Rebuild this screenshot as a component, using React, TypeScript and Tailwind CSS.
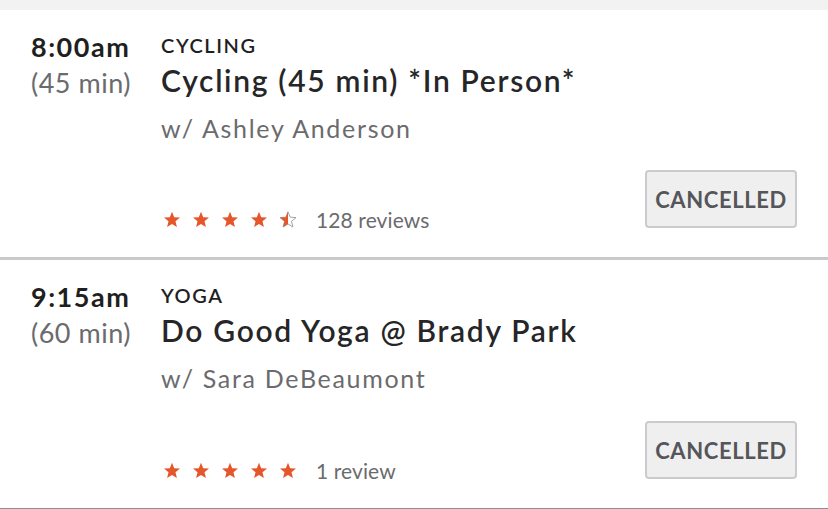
import React from "react";

const ORANGE = "#e5562b";

function Star({ x, half }: { x: number; half?: boolean }) {
  const d =
    "M9 0.8 L11.2 6.2 L17 6.6 L12.5 10.3 L13.9 16 L9 12.9 L4.1 16 L5.5 10.3 L1 6.6 L6.8 6.2 Z";
  return (
    <svg width="18" height="17" viewBox="0 0 18 17" className="shrink-0">
      {half ? (
        <>
          <defs>
            <clipPath id={`hl${x}`}>
              <rect x="0" y="0" width="9" height="17" />
            </clipPath>
          </defs>
          <path d={d} fill="none" stroke="#9a9a9a" strokeWidth="0.9" strokeLinejoin="round" />
          <path d={d} fill={ORANGE} clipPath={`url(#hl${x})`} />
        </>
      ) : (
        <path d={d} fill={ORANGE} />
      )}
    </svg>
  );
}

type Item = {
  time: string;
  dur: string;
  cat: string;
  title: string;
  who: string;
  half: boolean;
  reviews: string;
};

function Row({ item, last }: { item: Item; last?: boolean }) {
  return (
    <div
      className={`flex h-[250px] bg-white pl-[31px] pr-[31px] ${
        last ? "border-b-2 border-[#8e8e90]" : "border-b-[3px] border-[#c9c9cb]"
      }`}
    >
      <div className="w-[130px] shrink-0 pt-[21px]">
        <div className="text-[27px] leading-[32px] font-bold text-[#1f1f21] tracking-[1.5px]">
          {item.time}
        </div>
        <div className="mt-[4px] text-[27px] leading-[32px] font-normal text-[#6b6b6e] tracking-[0.5px]">
          {item.dur}
        </div>
      </div>
      <div className="flex flex-1 flex-col pt-[23px] pb-[29px]">
        <div className="text-[20px] leading-[24px] font-semibold text-[#1f1f21] tracking-[1.6px]">
          {item.cat}
        </div>
        <div className="mt-[4px] text-[30px] leading-[38px] font-semibold text-[#262628] tracking-[1.7px]">
          {item.title}
        </div>
        <div className="mt-[14px] text-[25px] leading-[30px] font-normal text-[#6b6b6e] tracking-[1.7px]">
          {item.who}
        </div>
        <div className="mt-auto flex items-end justify-between">
          <div className="mb-[-3px] flex items-baseline">
            <div className="flex items-end gap-[11px] pl-[2px]">
              <Star x={1} />
              <Star x={2} />
              <Star x={3} />
              <Star x={4} />
              <Star x={5} half={item.half} />
            </div>
            <span className="ml-[19px] text-[21px] leading-[22px] text-[#6b6b6e] tracking-[0.1px]">
              {item.reviews}
            </span>
          </div>
          <div className="flex h-[58px] w-[152px] items-center justify-center rounded-[4px] border-2 border-[#cbcbcd] bg-[#efeff0] text-[22px] font-bold tracking-[0.6px] text-[#55555a]">
            CANCELLED
          </div>
        </div>
      </div>
    </div>
  );
}

export default function App() {
  const items: Item[] = [
    {
      time: "8:00am",
      dur: "(45 min)",
      cat: "CYCLING",
      title: "Cycling (45 min) *In Person*",
      who: "w/ Ashley Anderson",
      half: true,
      reviews: "128 reviews",
    },
    {
      time: "9:15am",
      dur: "(60 min)",
      cat: "YOGA",
      title: "Do Good Yoga @ Brady Park",
      who: "w/ Sara DeBeaumont",
      half: false,
      reviews: "1 review",
    },
  ];
  return (
    <div
      className="h-[509px] w-[828px] overflow-hidden bg-[#f2f2f3]"
      style={{ fontFamily: "Lato, 'Noto Sans', sans-serif" }}
    >
      <div className="h-[10px]" />
      <Row item={items[0]} />
      <Row item={items[1]} last />
    </div>
  );
}
